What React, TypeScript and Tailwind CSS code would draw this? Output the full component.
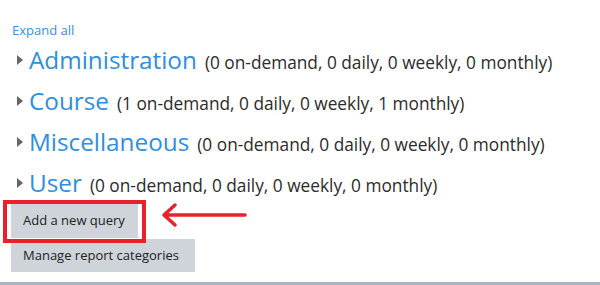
import React from "react";

const cats = [
  { name: "Administration", counts: "(0 on-demand, 0 daily, 0 weekly, 0 monthly)" },
  { name: "Course", counts: "(1 on-demand, 0 daily, 0 weekly, 1 monthly)" },
  { name: "Miscellaneous", counts: "(0 on-demand, 0 daily, 0 weekly, 0 monthly)" },
  { name: "User", counts: "(0 on-demand, 0 daily, 0 weekly, 0 monthly)" },
];

export default function App() {
  return (
    <div className="w-[600px] h-[285px] bg-white relative overflow-hidden" style={{ fontFamily: '"Open Sans", "Noto Sans", sans-serif' }}>
      <div className="pt-[22px] pl-[12px]">
        <div className="text-[13px] leading-[17px] text-[#3a8ee6]">Expand all</div>
        <div className="flex flex-col">
          {cats.map((c) => (
            <div key={c.name} className="flex items-baseline h-[41px]">
              <svg width="6" height="10" viewBox="0 0 6 10" className="mr-[6px] ml-[5px] self-center">
                <path d="M0 0 L6 5 L0 10 Z" fill="#666" />
              </svg>
              <span className="text-[24.3px] leading-[41px] text-[#2f8ee0]">{c.name}</span>
              <span className="ml-[8px] text-[17.3px] text-[#2b2b2b]">{c.counts}</span>
            </div>
          ))}
        </div>
        <div className="relative mt-[1px] ml-[-1px]">
          <div className="bg-[#ced4da] w-[127px] h-[34px] flex items-center pl-[12px] text-[13px] text-[#222]">Add a new query</div>
          <div className="absolute left-[-8px] top-[-4px] w-[143px] h-[43px] border-[4px] border-[#e8212b]" />
          <svg className="absolute left-[150px] top-[-2px]" width="86" height="26" viewBox="0 0 86 26">
            <path d="M84 13 H4 M14 3 L3 13 L14 23" stroke="#e8212b" strokeWidth="3.5" fill="none" strokeLinecap="round" strokeLinejoin="round" />
          </svg>
          <div className="mt-[1px] bg-[#ced4da] w-[184px] h-[33px] flex items-center pl-[12px] text-[13px] text-[#222]">Manage report categories</div>
        </div>
      </div>
      <div className="absolute left-0 bottom-0 w-full h-[3px] bg-[#a9b4c4]" />
    </div>
  );
}
